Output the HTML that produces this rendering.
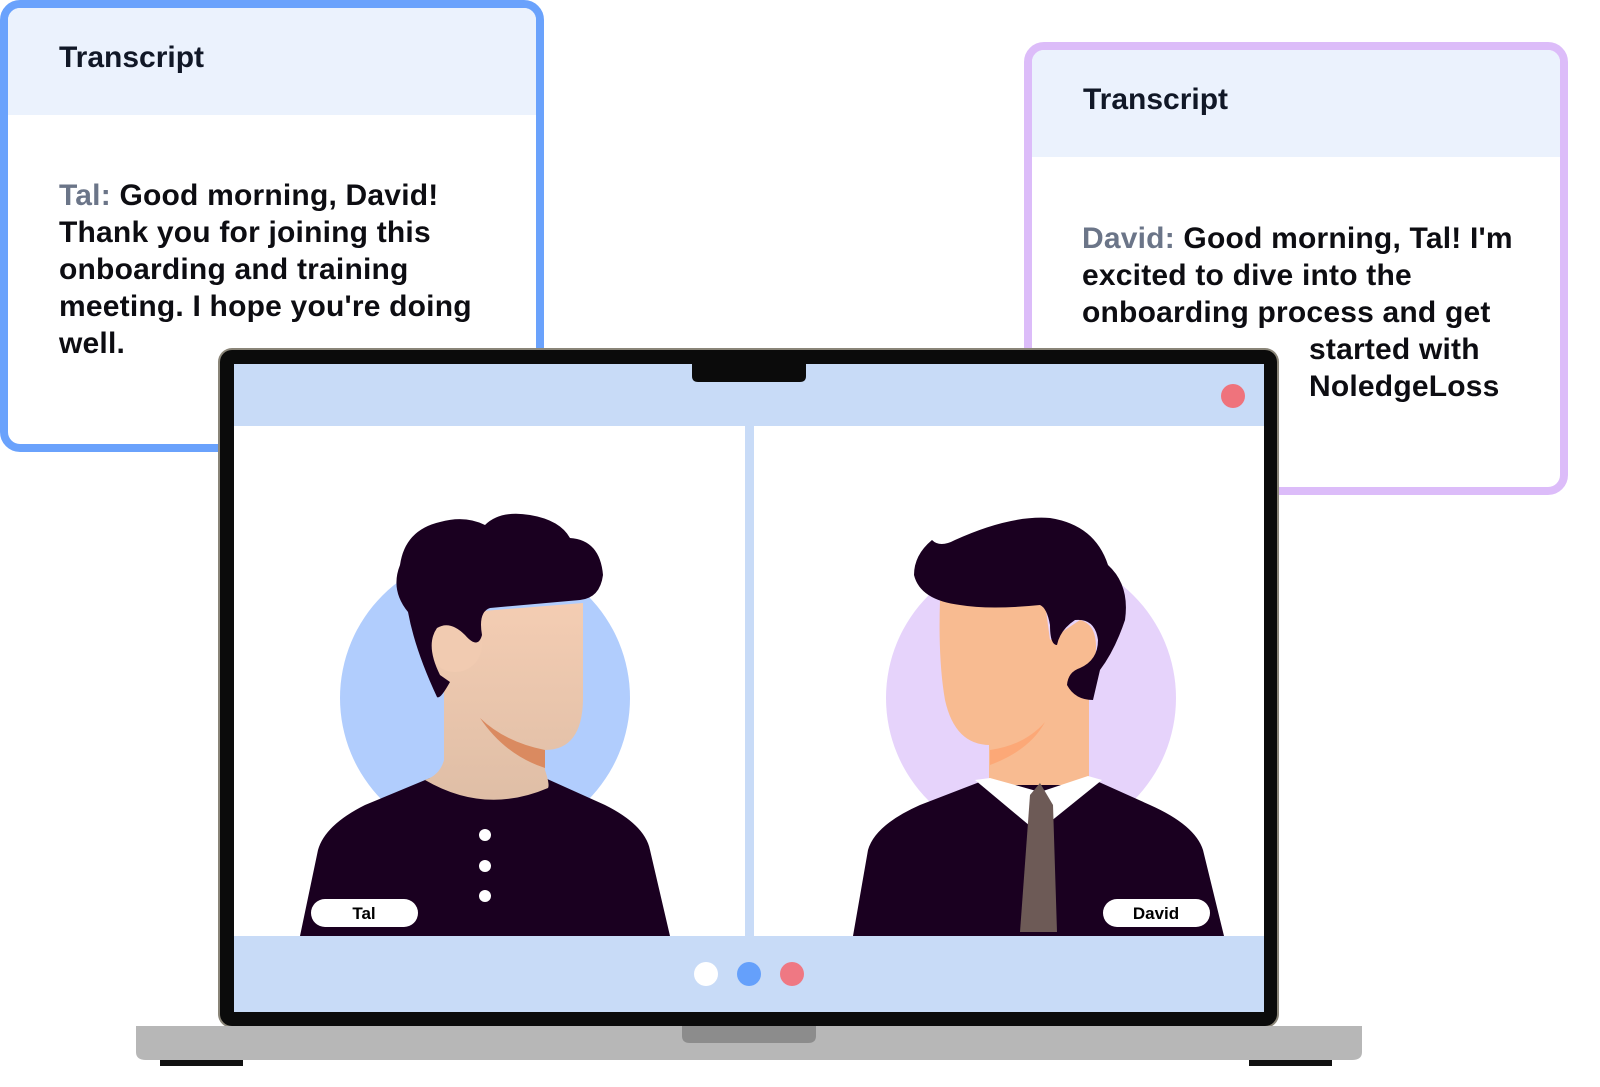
<!DOCTYPE html>
<html><head><meta charset="utf-8"><style>
body{margin:0;width:1600px;height:1087px;background:#fff;position:relative;overflow:hidden;font-family:"Liberation Sans",sans-serif}
.card{position:absolute;box-sizing:border-box;background:#fff;border-radius:20px;overflow:hidden}
.hd{background:#ebf2fd;font-weight:bold;font-size:30px;color:#111827}
.tx{position:absolute;font-weight:bold;font-size:30px;line-height:37px;color:#0d0d12;white-space:nowrap;letter-spacing:0.2px}
.g{color:#6b7588}
</style></head><body>
<div class="card" style="left:0;top:0;width:544px;height:452px;border:8px solid #6aa2fc">
 <div class="hd" style="height:107px;padding-left:51px;line-height:100px">Transcript</div>
 <div class="tx" style="left:51px;top:169px"><span class="g">Tal:</span> Good morning, David!<br>Thank you for joining this<br>onboarding and training<br>meeting. I hope you're doing<br>well.</div>
</div>
<div class="card" style="left:1024px;top:42px;width:544px;height:453px;border:8px solid #dcbcf9">
 <div class="hd" style="height:107px;padding-left:51px;line-height:100px">Transcript</div>
 <div class="tx" style="left:50px;top:170px"><span class="g">David:</span> Good morning, Tal! I'm<br>excited to dive into the<br>onboarding process and get<br><span style="padding-left:227px">started with</span><br><span style="padding-left:227px">NoledgeLoss</span></div>
</div>
<svg style="position:absolute;left:0;top:0" width="1600" height="1087" viewBox="0 0 1600 1087">
<defs>
<linearGradient id="sk1" x1="0" y1="0" x2="0" y2="1"><stop offset="0" stop-color="#f4cdb3"/><stop offset="1" stop-color="#dfbea6"/></linearGradient>
</defs>
<rect x="218" y="348" width="1061" height="680" rx="14" fill="#8a8578"/>
<rect x="220" y="350" width="1057" height="676" rx="12" fill="#0b0b0b"/>
<rect x="234" y="364" width="1030" height="648" fill="#fff"/>
<rect x="234" y="364" width="1030" height="62" fill="#c8dbf7"/>
<rect x="234" y="936" width="1030" height="76" fill="#c8dbf7"/>
<rect x="745" y="426" width="9" height="510" fill="#c8dbf7"/>
<path d="M692,364 H806 V376 Q806,382 800,382 H698 Q692,382 692,376 Z" fill="#0b0b0b"/>
<circle cx="1233" cy="396" r="12" fill="#ef737c"/>
<circle cx="706" cy="974" r="12" fill="#fff"/>
<circle cx="749" cy="974" r="12" fill="#65a0fb"/>
<circle cx="792" cy="974" r="12" fill="#ef7883"/>
<clipPath id="c1"><rect x="234" y="426" width="511" height="510"/></clipPath>
<g clip-path="url(#c1)">
<circle cx="485" cy="698" r="145" fill="#b1cdfd"/>
<path d="M300,936 L318,850 Q325,825 365,805 L430,778 Q485,815 545,778 L605,805 Q645,825 650,850 L670,936 Z" fill="#1a0020"/>
<path d="M470,612 L583,603 L583,700 Q582,750 545,750 L545,770 Q550,785 548,788 Q485,815 425,780 Q440,775 444,760 L444,690 Q430,680 428,650 L470,612 Z" fill="url(#sk1)"/>
<circle cx="455" cy="645" r="27" fill="#f1cbb1"/>
<path d="M480,718 Q505,742 545,750 L545,768 Q505,755 480,718 Z" fill="#da8a60"/>
<path d="M408,612 Q390,590 400,565 Q405,530 440,522 Q465,515 485,525 Q500,510 530,515 Q560,520 570,538 Q600,540 603,575 Q600,598 580,600 L490,608 Q478,612 482,635 Q478,650 465,635 Q450,620 437,628 Q425,645 440,675 L450,682 Q440,700 437,697 Q415,650 408,612 Z" fill="#1a0020"/>
<circle cx="485" cy="835" r="6" fill="#fff"/>
<circle cx="485" cy="866" r="6" fill="#fff"/>
<circle cx="485" cy="896" r="6" fill="#fff"/>
<rect x="311" y="899" width="107" height="28" rx="14" fill="#fff"/>
<text x="364" y="919" text-anchor="middle" font-family="Liberation Sans" font-weight="bold" font-size="17" fill="#000">Tal</text>
</g>
<clipPath id="c2"><rect x="754" y="426" width="510" height="510"/></clipPath>
<g clip-path="url(#c2)">
<circle cx="1031" cy="698" r="145" fill="#e6d3fb"/>
<path d="M853,936 L868,850 Q875,825 920,805 L990,778 L1090,778 L1150,805 Q1195,825 1203,850 L1224,936 Z" fill="#1a0020"/>
<rect x="989" y="690" width="100" height="95" fill="#f8bb91"/>
<path d="M940,600 L1045,603 L1050,640 L1080,620 Q1100,625 1095,660 Q1090,675 1075,680 L1088,700 L1088,760 L990,760 L990,745 Q955,745 945,700 Q938,660 940,600 Z" fill="#f8bb91"/>
<path d="M990,750 Q1025,745 1045,722 Q1030,750 990,765 Z" fill="#fca877"/>
<path d="M975,780 L990,778 L1040,792 L1088,776 L1102,780 L1045,826 L1040,800 L1030,826 Z" fill="#fff"/>
<path d="M1030,795 L1040,783 L1053,805 L1057,932 L1020,932 Z" fill="#6d5a56"/>
<path d="M932,540 Q940,548 955,540 Q1010,515 1050,518 Q1095,525 1108,565 Q1130,585 1125,620 Q1115,650 1100,670 L1093,700 Q1075,700 1067,685 Q1068,672 1080,668 Q1098,660 1098,640 Q1095,618 1075,620 Q1060,630 1057,645 Q1050,645 1050,625 Q1047,608 1040,605 Q990,610 960,605 Q920,600 914,575 Q914,555 932,540 Z" fill="#1a0020"/>
<rect x="1103" y="899" width="107" height="28" rx="14" fill="#fff"/>
<text x="1156" y="919" text-anchor="middle" font-family="Liberation Sans" font-weight="bold" font-size="17" fill="#000">David</text>
</g>
<path d="M136,1026 H1362 V1052 Q1362,1060 1352,1060 H146 Q136,1060 136,1052 Z" fill="#b7b7b7"/>
<path d="M682,1026 H816 V1036 Q816,1043 808,1043 H690 Q682,1043 682,1036 Z" fill="#8c8c8c"/>
<rect x="160" y="1060" width="83" height="6" fill="#111"/>
<rect x="1249" y="1060" width="83" height="6" fill="#111"/>
</svg>
</body></html>
